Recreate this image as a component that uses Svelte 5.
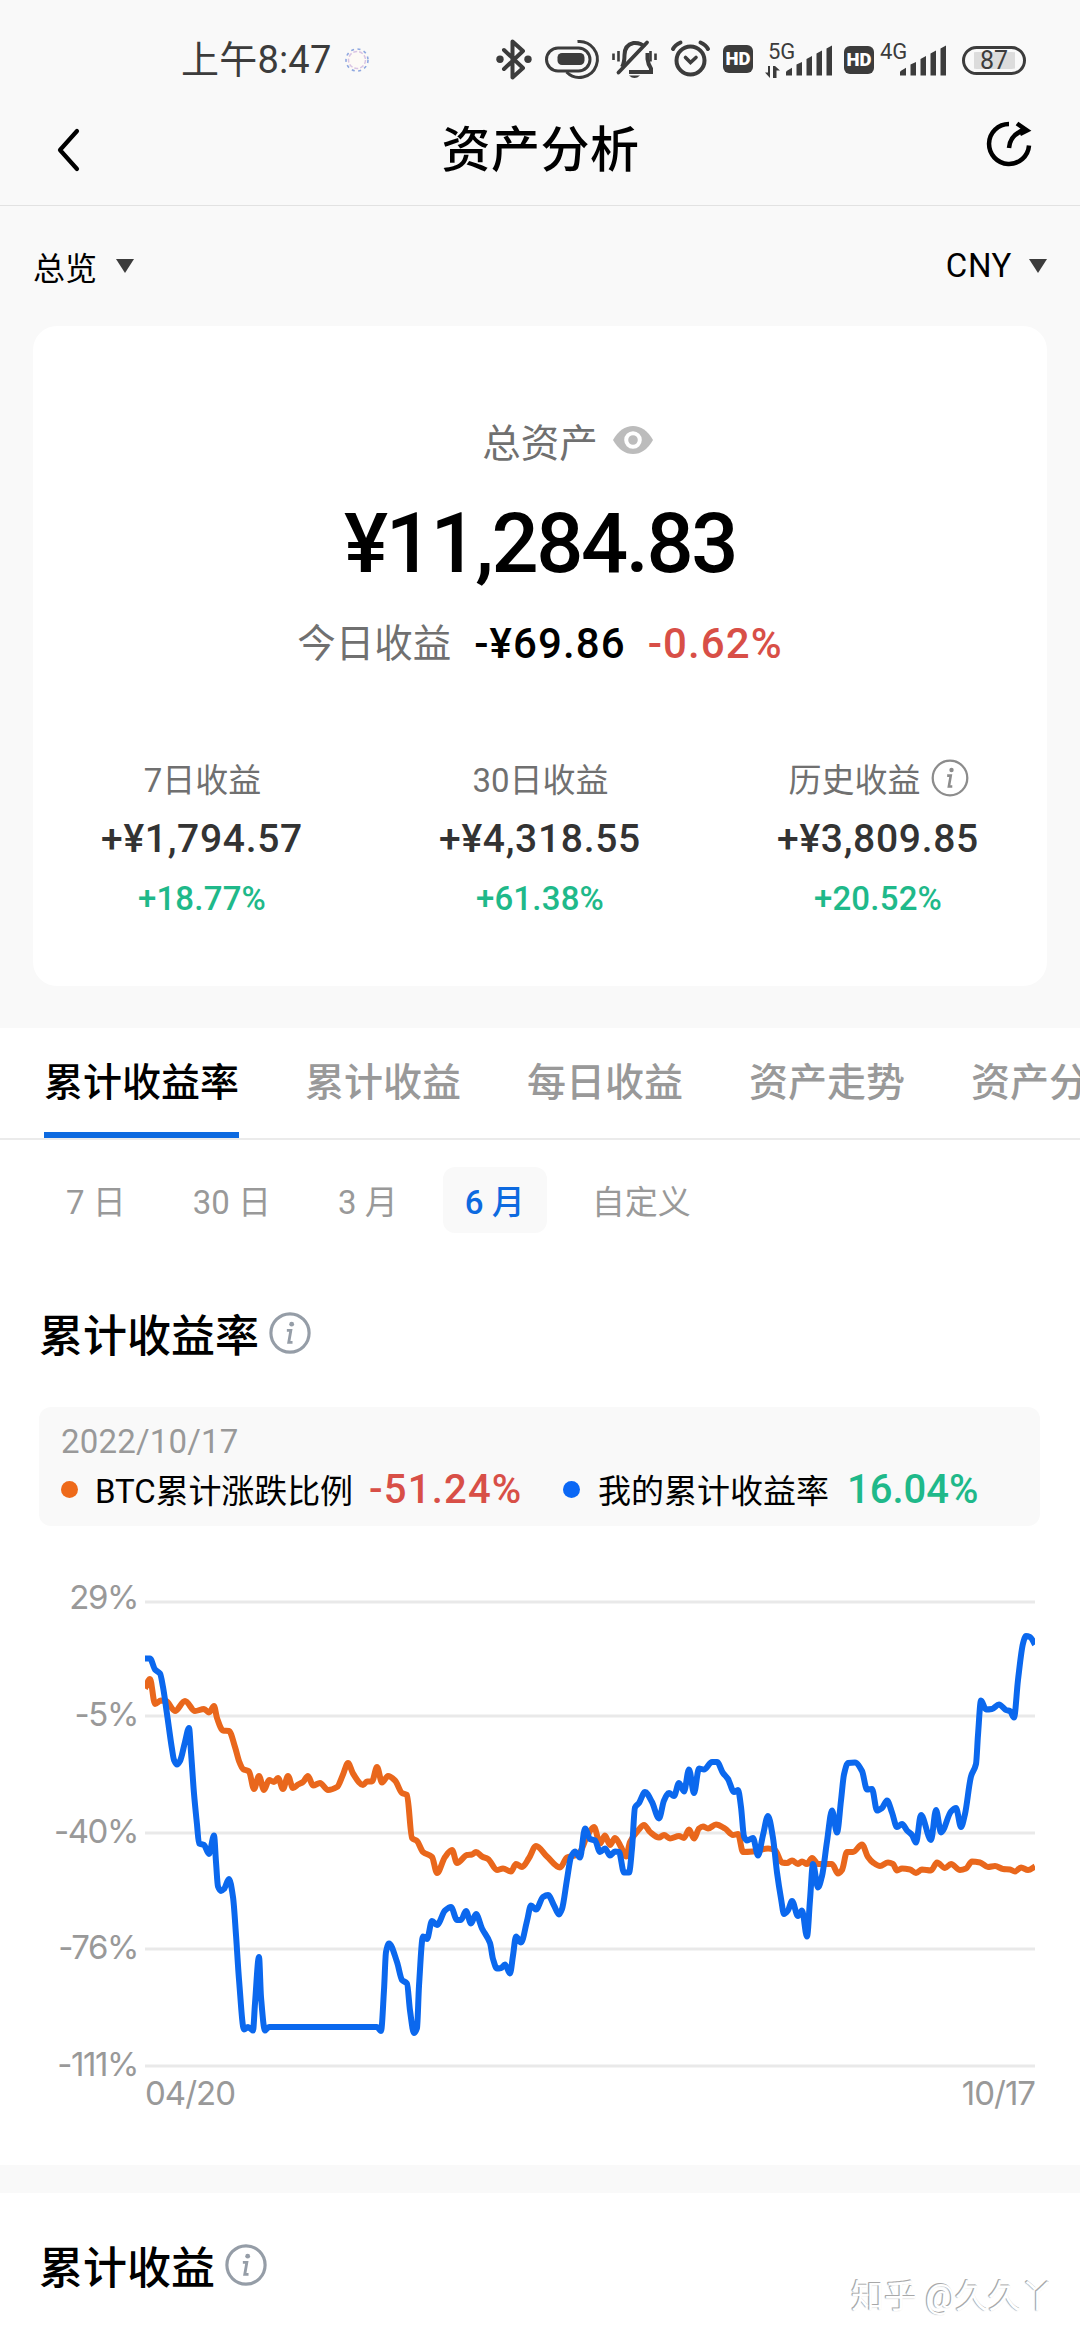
<script lang="ts">
    const stats = [
        { label: '7日收益', value: '+¥1,794.57', rate: '+18.77%', info: false },
        { label: '30日收益', value: '+¥4,318.55', rate: '+61.38%', info: false },
        { label: '历史收益', value: '+¥3,809.85', rate: '+20.52%', info: true }
    ];

    const tabs = ['累计收益率', '累计收益', '每日收益', '资产走势', '资产分布'];
    const ranges = ['7 日', '30 日', '3 月', '6 月', '自定义'];

    let activeTab = $state(0);
    let activeRange = $state(3);

    const yLabels = ['29%', '-5%', '-40%', '-76%', '-111%'];
    const gridLines = [2, 116, 233, 349, 466];

    const btc = [
        0, 88.5, 5, 79, 10, 104, 16, 100.5, 21, 101, 30, 111, 40, 101, 50, 111, 59, 109, 64, 112.5, 69, 106, 72, 118,
        78, 130.5, 84, 131, 90, 147, 94, 161, 98, 169, 104, 171.5, 109, 189, 114, 176, 119, 190, 124, 180, 129, 182,
        133, 178, 138, 189, 143, 176, 148, 188, 153, 184.5, 158, 182, 163, 176, 168, 185.5, 175, 183, 183, 190,
        192, 187, 198, 174.5, 203, 163, 208, 173.5, 218, 185, 222, 181.5, 227, 181.5, 232, 167, 237, 182.5,
        243, 176, 250, 180.5, 257, 193, 262, 195, 267, 238, 272, 241, 278, 252, 287, 257, 292, 273, 300, 257,
        307, 250, 312, 263, 322, 255, 327, 254.5, 331, 252, 337, 256.5, 343, 259, 352, 270, 358, 268.5, 366, 271.5,
        371, 264, 377, 267, 384, 258, 391, 246, 402, 256.5, 415, 267.5, 422, 257.5, 430, 255.5, 435, 252,
        442, 236.5, 449, 227, 455, 243.5, 460, 235.5, 465, 245, 470, 238, 476, 247, 481, 256.5, 485, 242,
        493, 230.5, 499, 225, 505, 232, 514, 237.5, 519, 235, 525, 238.5, 534, 236, 539, 238, 544, 229.5,
        549, 238.5, 554, 228.5, 558, 226.5, 563, 228.5, 571, 224.5, 580, 228.5, 588, 235, 593, 234, 598, 252,
        608, 251.5, 623, 248.5, 630, 250, 637, 262.5, 642, 263, 647, 260.5, 653, 264, 657, 261.5, 662, 264,
        667, 258, 673, 264, 687, 264, 693, 273.5, 697, 270, 702, 252, 708, 252, 717, 244.5, 723, 257, 728, 262.5,
        735, 266, 743, 262.5, 748, 264, 752, 270.5, 757, 268.5, 765, 269.5, 771, 273, 777, 269.5, 786, 270.5,
        792, 262.5, 800, 268, 806, 264, 815, 270, 821, 268.5, 827, 261.5, 835, 262.5, 843, 267, 850, 266,
        858, 269, 865, 269.5, 870, 271.5, 876, 267.5, 883, 270, 890, 266.5
    ];

    const mine = [
        0, 58.5, 5, 58.5, 10, 69.5, 15, 73.5, 18, 87, 22, 114, 27, 149, 29, 160, 32, 164.5, 35, 161, 40, 142,
        44, 128, 46, 152, 49, 193.5, 52, 224.5, 54, 243.5, 59, 245, 64, 254, 69, 235.5, 71, 262, 73, 286.5,
        76, 291, 79, 289, 84, 279, 88, 297, 91, 335, 94, 379.5, 99, 429.5, 103, 427, 108, 430.5, 110, 403.5,
        114, 357, 116, 397, 120, 430.5, 124, 427, 232, 427, 236, 431, 239, 390, 241, 352, 244, 343.5, 252, 362,
        257, 380, 262, 383.5, 265, 410.5, 269, 433, 272, 428, 274, 386, 278, 336.5, 282, 339, 287, 321, 292, 325,
        300, 310.5, 306, 307, 312, 320, 316, 320, 321, 311, 326, 323.5, 331, 314, 337, 328.5, 345, 343, 348, 359,
        352, 368.5, 356, 368, 360, 364.5, 365, 373.5, 368, 355.5, 371, 336.5, 376, 342.5, 382, 321, 386, 305.5,
        391, 309.5, 398, 297, 403, 295, 409, 305.5, 414, 314.5, 417, 309, 422, 279.5, 426, 257, 430, 251.5,
        435, 257.5, 440, 228.5, 445, 239, 450, 240.5, 455, 252, 460, 248.5, 465, 255.5, 470, 251.5, 474, 252,
        479, 272.5, 484, 272.5, 487, 248.5, 490, 207.5, 494, 203, 500, 192, 507, 202, 514, 218.5, 519, 200.5,
        524, 193, 529, 196, 534, 183, 539, 191.5, 544, 169.5, 549, 193, 554, 168.5, 559, 169.5, 567, 162,
        572, 162, 578, 173, 583, 179, 589, 192, 593, 190, 596, 207, 599, 236.5, 602, 240.5, 608, 238, 613, 255.5,
        618, 235, 623, 216, 628, 238, 632, 272.5, 636, 298.5, 639, 314, 643, 310.5, 647, 301, 653, 316,
        657, 310.5, 662, 336.5, 665, 300, 668, 264, 673, 287.5, 677, 276, 682, 241.5, 687, 210.5, 692, 232.5,
        696, 200.5, 699, 174.5, 703, 163, 710, 162.5, 717, 171, 722, 189.5, 727, 189, 732, 210.5, 737, 208,
        742, 200.5, 747, 212.5, 752, 227, 757, 224, 762, 230.5, 767, 235, 771, 242.5, 776, 215, 786, 240,
        791, 210, 796, 232.5, 806, 211.5, 811, 208, 816, 227, 820, 214, 826, 176.5, 831, 164, 833, 135,
        836, 100.5, 841, 109.5, 847, 109, 854, 104.5, 861, 110, 865, 111, 869, 117.5, 873, 80, 878, 43.5,
        881, 36, 885, 37, 890, 44.5
    ];

    // monotone cubic through flat [x0, y0, x1, y1, ...]
    function smooth(flat: number[]) {
        const n = flat.length / 2;
        const x = (i: number) => flat[i * 2];
        const y = (i: number) => flat[i * 2 + 1];
        const slope = (i: number) => (y(i + 1) - y(i)) / (x(i + 1) - x(i));
        const tangent = (i: number) => {
            if (i === 0) return slope(0);
            if (i === n - 1) return slope(n - 2);
            const a = slope(i - 1);
            const b = slope(i);
            return a * b <= 0 ? 0 : (2 * a * b) / (a + b);
        };
        let d = `M${x(0)},${y(0)}`;
        for (let i = 0; i < n - 1; i++) {
            const h = (x(i + 1) - x(i)) / 3;
            d += `C${x(i) + h},${y(i) + h * tangent(i)} ${x(i + 1) - h},${y(i + 1) - h * tangent(i + 1)} ${x(i + 1)},${y(i + 1)}`;
        }
        return d;
    }
</script>

<svelte:head>
    <title>资产分析</title>
</svelte:head>

{#snippet info(size: number, thick: number)}
    <svg class="info" width={size} height={size} viewBox="0 0 40 40">
        <circle cx="20" cy="20" r="18.2" fill="none" stroke="currentColor" stroke-width={thick} />
        <circle cx="21.6" cy="11.6" r="2.3" fill="currentColor" />
        <path d="M17 17.5h3.8l-2 11.5h3.6" fill="none" stroke="currentColor" stroke-width="2.7" />
    </svg>
{/snippet}

{#snippet signal()}
    <svg class="signal" width="48" height="31" viewBox="0 0 48 31">
        <path d="M1 30.5v-3q0-1.2 1-1.7l5-3v7.7zM11.5 30.5v-11l5.500-2.500v13.500zM21.500 30.500v-16.500l5.500-3v19.500zM31.500 30.500v-22l5.500-3v25zM41.500 30.500v-27l5.500-3v30z" fill="#3c3c3c" />
    </svg>
{/snippet}

<main>
    <div class="status">
        <span class="time">上午8:47</span>
        <svg class="spinner" width="26" height="26" viewBox="0 0 26 26">
            <circle cx="13" cy="13" r="11" fill="#fdfaf6" stroke="#8fa8e0" stroke-width="1.6" stroke-dasharray="3 3.5" />
            <circle cx="13" cy="13" r="8.5" fill="none" stroke="#d9c4e4" stroke-width="1.5" stroke-dasharray="4 2" />
        </svg>
        <svg class="icons" width="266" height="50" viewBox="490 35 266 50" fill="none" stroke="#3c3c3c">
            <path d="M504 50l19 18-10.5 9.5v-36l10.5 9.5-19 18" stroke-width="4" stroke-linejoin="round" stroke-linecap="round" />
            <g fill="#3c3c3c" stroke="none">
                <circle cx="500" cy="59.2" r="3.7" />
                <circle cx="528" cy="59.2" r="3.7" />
            </g>
            <rect x="546.5" y="48" width="43.5" height="23" rx="11.5" stroke-width="3" />
            <rect x="557.5" y="53" width="27" height="12" rx="4.5" fill="#3c3c3c" stroke="none" />
            <path d="M577.5 41.500a18 18 0 1 1-11 30.500" stroke-width="3" />
            <path d="M622 67q2.500-4 2.500-12 0-10 9-12 7.500-.5 11 4M647.500 53v6q.5 5 3.500 9.500v3.500h-22" stroke-width="4" />
            <path d="M618.5 72.5l28.5-30" stroke-width="3.8" stroke-linecap="round" />
            <path d="M629 75.5h11q-5.500 5-11 0z" fill="#3c3c3c" stroke="none" />
            <path d="M613.5 53.5v6.5M618.5 51v10.5M650.5 51v10.5M655.5 53.5v6.5" stroke-width="2.6" />
            <circle cx="690.5" cy="60.5" r="14" stroke-width="4" />
            <path d="M685.5 57.5l5 5 5.5-5" stroke-width="3.6" stroke-linecap="round" />
            <path d="M673 49q2-4 7.500-6.500M708 49q-2-4-7.500-6.500" stroke-width="4" stroke-linecap="round" />
            <rect x="723" y="45" width="30" height="28" rx="6" fill="#3c3c3c" stroke="none" />
            <text class="hd" x="738" y="65">HD</text>
        </svg>
        <div class="net five">
            <span>5G</span>
            <svg width="16" height="12" viewBox="0 0 16 12">
                <path d="M5 0v12L0 6.500h3V0zM8 12V0h2l5 4.500h-3.500V12z" fill="#3c3c3c" />
            </svg>
        </div>
        {@render signal()}
        <svg class="badge" width="30" height="28" viewBox="0 0 30 28">
            <rect width="30" height="28" rx="6" fill="#3c3c3c" />
            <text class="hd" x="15" y="20">HD</text>
        </svg>
        <div class="net four"><span>4G</span></div>
        {@render signal()}
        <div class="battery"><span>87</span></div>
    </div>

    <header>
        <svg width="24" height="44" viewBox="0 0 24 44">
            <path d="M20 3L3 22l17 19" fill="none" stroke="#000" stroke-width="4.2" stroke-linecap="round" stroke-linejoin="round" />
        </svg>
        <h1>资产分析</h1>
        <svg width="46" height="46" viewBox="0 0 46 46" fill="none" stroke="#000" stroke-width="4.5">
            <path d="M23 3a20 20 0 1 0 20 21.500" />
            <path d="M23 27Q24 13.500 39 8.500M31 2.500L41 9.500 34 13" />
        </svg>
    </header>

    <div class="filters">
        <button>总览<i></i></button>
        <button class="currency">CNY<i></i></button>
    </div>

    <section class="card">
        <div class="total-label">
            总资产
            <svg width="40" height="28" viewBox="0 0 40 28">
                <path d="M0 14Q8 0 20 0t20 14Q32 28 20 28T0 14z" fill="#bcbcbc" />
                <circle cx="20" cy="14" r="6.8" fill="none" stroke="#fff" stroke-width="4" />
            </svg>
        </div>
        <div class="total">¥11,284.83</div>
        <div class="today">
            <span class="name">今日收益</span>
            <span class="amount">-¥69.86</span>
            <span class="down">-0.62%</span>
        </div>
        <div class="stats">
            {#each stats as stat}
                <div class="stat">
                    <div class="label">{stat.label}{#if stat.info}{@render info(38, 2.4)}{/if}</div>
                    <div class="value">{stat.value}</div>
                    <div class="rate">{stat.rate}</div>
                </div>
            {/each}
        </div>
    </section>

    <nav>
        {#each tabs as tab, i}
            <button class:active={activeTab === i} onclick={() => (activeTab = i)}>{tab}</button>
        {/each}
    </nav>

    <section class="panel">
        <div class="ranges">
            {#each ranges as range, i}
                <button class:active={activeRange === i} onclick={() => (activeRange = i)}>{range}</button>
            {/each}
        </div>

        <h2>累计收益率{@render info(42, 3)}</h2>

        <div class="legend">
            <div class="date">2022/10/17</div>
            <div class="row">
                <i class="dot orange"></i>
                <span class="first">BTC累计涨跌比例</span>
                <b class="down">-51.24%</b>
                <i class="dot blue"></i>
                <span class="second">我的累计收益率</span>
                <b class="up">16.04%</b>
            </div>
        </div>

        <div class="chart">
            <div class="y-axis">
                {#each yLabels as label}
                    <span>{label}</span>
                {/each}
            </div>
            <div class="plot">
                <svg width="890" height="470" viewBox="0 0 890 470">
                    {#each gridLines as y}
                        <line x1="0" x2="890" y1={y} y2={y} stroke="#e9e9e9" stroke-width="3" />
                    {/each}
                    <g fill="none" stroke-width="6" stroke-linejoin="round">
                        <path d={smooth(btc)} stroke="#e9671c" />
                        <path d={smooth(mine)} stroke="#0b68ee" />
                    </g>
                </svg>
                <div class="x-axis">
                    <span>04/20</span>
                    <span>10/17</span>
                </div>
            </div>
        </div>
    </section>

    <section class="next">
        <h2>累计收益{@render info(42, 3)}</h2>
        <span class="watermark">知乎 @久久丫</span>
    </section>
</main>

<style>
    :global(body) {
        background: #f9f9f9;
    }

    main {
        width: 1080px;
        height: 2340px;
        overflow: hidden;
        background: #f9f9f9;
        color: #000;
        font-family: Roboto, "Noto Sans CJK SC", sans-serif;
        font-size: 33px;
    }

    svg {
        display: block;
        flex: none;
    }

    button {
        padding: 0;
        border: 0;
        background: none;
        font: inherit;
        color: inherit;
        white-space: nowrap;
        cursor: pointer;
    }

    .status {
        display: flex;
        align-items: center;
        height: 120px;
        padding-left: 181px;
        color: #3c3c3c;
    }

    .time {
        width: 151px;
        font-size: 38px;
        line-height: 120px;
        letter-spacing: 0.2px;
        white-space: nowrap;
    }

    .spinner {
        margin-left: 12px;
    }

    .icons {
        margin-left: 120px;
    }

    .hd {
        font-family: Roboto, sans-serif;
        font-size: 18.5px;
        font-weight: 900;
        text-anchor: middle;
        fill: #fff;
        stroke: none;
    }

    .net {
        height: 36px;
        font-size: 22px;
        line-height: 20px;
    }

    .five {
        width: 17px;
        margin-left: 9px;
        white-space: nowrap;
    }

    .five span {
        margin-left: 3px;
    }

    .five svg {
        margin-top: 4px;
    }

    .four {
        width: 16px;
        margin-left: 6px;
        white-space: nowrap;
    }

    .signal {
        margin-left: 3px;
    }

    .badge {
        margin-left: 11px;
    }

    .battery {
        box-sizing: border-box;
        width: 64px;
        height: 29px;
        margin-left: 15px;
        border: 3px solid #3c3c3c;
        border-radius: 15px;
        background: linear-gradient(90deg, transparent 9px, #dcdcdc 9px, #dcdcdc 50px, transparent 50px);
        background-clip: content-box;
        padding: 3px 0;
        font-size: 25px;
        line-height: 18px;
        text-align: center;
    }

    header {
        display: flex;
        align-items: center;
        justify-content: space-between;
        height: 85px;
        padding: 0 48px 0 57px;
        border-bottom: 1px solid #e2e2e2;
    }

    header svg {
        margin-bottom: 25px;
    }

    header svg:last-child {
        margin-bottom: 38px;
    }

    h1 {
        margin: 0 0 23px 14px;
        font-size: 49px;
        font-weight: 500;
        line-height: 60px;
        letter-spacing: 0.5px;
    }

    .filters {
        display: flex;
        justify-content: space-between;
        height: 120px;
        padding: 0 33px;
        font-size: 32px;
    }

    .filters button {
        display: flex;
        align-items: center;
        gap: 19px;
        height: 119px;
    }

    .filters .currency {
        gap: 17px;
        font-size: 33px;
        letter-spacing: 0.6px;
    }

    .filters i {
        border: 9px solid transparent;
        border-top: 14px solid #3c3c3c;
        border-bottom: 0;
    }

    .card {
        box-sizing: border-box;
        height: 660px;
        margin: 0 33px;
        padding-top: 84px;
        border-radius: 24px;
        background: #fff;
    }

    .total-label {
        display: flex;
        align-items: center;
        justify-content: center;
        gap: 15px;
        height: 60px;
        margin-left: 55px;
        font-size: 38.5px;
        color: #707070;
    }

    .total {
        height: 144px;
        font-size: 83px;
        font-weight: 500;
        line-height: 147px;
        letter-spacing: -2.4px;
        text-align: center;
    }

    .today {
        display: flex;
        align-items: center;
        justify-content: center;
        height: 60px;
        font-size: 42px;
        font-weight: 500;
        line-height: 60px;
        letter-spacing: 1.1px;
    }

    .today .name {
        margin-right: 23px;
        font-size: 38.5px;
        font-weight: 400;
        letter-spacing: 0;
        color: #707070;
    }

    .amount {
        margin-right: 22px;
    }

    .down {
        color: #d84f47;
    }

    .up {
        color: #1fb98a;
    }

    .stats {
        display: flex;
        padding-top: 77px;
    }

    .stat {
        flex: 1;
        text-align: center;
    }

    .label {
        display: flex;
        align-items: center;
        justify-content: center;
        gap: 10px;
        height: 53px;
        padding-left: 1px;
        color: #707070;
    }

    .value {
        height: 70px;
        font-size: 39px;
        font-weight: 500;
        line-height: 70px;
        letter-spacing: 0.7px;
        color: #333;
    }

    .rate {
        height: 50px;
        font-weight: 500;
        line-height: 50px;
        letter-spacing: 0.2px;
        color: #1fb98a;
    }

    nav {
        display: flex;
        gap: 66px;
        height: 110px;
        margin-top: 42px;
        padding-left: 44px;
        overflow: hidden;
        border-bottom: 2px solid #ebebeb;
        background: #fff;
        font-size: 39px;
        font-weight: 500;
        color: #999;
    }

    nav button {
        flex: none;
        border-bottom: 6px solid transparent;
        padding-bottom: 2px;
    }

    nav .active {
        border-color: #0d6ae0;
        color: #000;
    }

    .panel {
        box-sizing: border-box;
        height: 1025px;
        padding-top: 27px;
        background: #fff;
    }

    .ranges {
        display: flex;
        gap: 23px;
        height: 66px;
        padding-left: 44px;
        color: #999;
    }

    .ranges button {
        padding: 0 22px;
        border-radius: 12px;
    }

    .ranges .active {
        background: #f9f9f9;
        font-weight: 500;
        color: #0d6ae0;
    }

    h2 {
        display: flex;
        align-items: center;
        gap: 10px;
        height: 60px;
        margin: 70px 0 0 39px;
        font-size: 44px;
        font-weight: 500;
    }

    .info {
        color: #8c8c8c;
    }

    h2 .info {
        color: #959da7;
    }

    .legend {
        box-sizing: border-box;
        height: 119px;
        margin: 44px 40px 0 39px;
        padding: 12px 0 0 22px;
        border-radius: 12px;
        background: #f9f9f9;
    }

    .date {
        height: 44px;
        line-height: 46px;
        letter-spacing: 0.2px;
        color: #999;
    }

    .row {
        display: flex;
        align-items: center;
        height: 52px;
    }

    .row span {
        white-space: nowrap;
    }

    .row b {
        font-size: 40px;
        font-weight: 500;
    }

    .dot {
        width: 17px;
        height: 17px;
        border-radius: 50%;
    }

    .orange {
        background: #ee6a1a;
    }

    .blue {
        background: #0b68f5;
    }

    .first {
        width: 258px;
        margin: 0 16px 0 17px;
        letter-spacing: -0.1px;
    }

    .row .down {
        width: 151px;
        margin-right: 43px;
        letter-spacing: 1.2px;
    }

    .second {
        width: 231px;
        margin: 0 18px;
    }

    .chart {
        display: flex;
        gap: 8px;
        margin-top: 74px;
        color: #999;
    }

    .y-axis {
        display: flex;
        flex-direction: column;
        justify-content: space-between;
        width: 138px;
        height: 507px;
        margin: -23px -1px 0 0;
        font-family: Inter, sans-serif;
        letter-spacing: -1.4px;
        text-align: right;
    }

    .y-axis span {
        height: 40px;
        font-size: 33px;
        line-height: 40px;
    }

    .x-axis {
        display: flex;
        justify-content: space-between;
        height: 46px;
        font-family: Inter, sans-serif;
        line-height: 47px;
        letter-spacing: -1px;
    }

    .next {
        display: flex;
        justify-content: space-between;
        height: 147px;
        margin-top: 28px;
        background: #fff;
    }

    .next h2 {
        margin-top: 42px;
    }

    .watermark {
        margin: 78px 26px 0 0;
        font-size: 33px;
        line-height: 52px;
        color: #fff;
        text-shadow: -1px -1px 0 #a8a8a8, -1px 0 1px #a8a8a8;
    }
</style>
